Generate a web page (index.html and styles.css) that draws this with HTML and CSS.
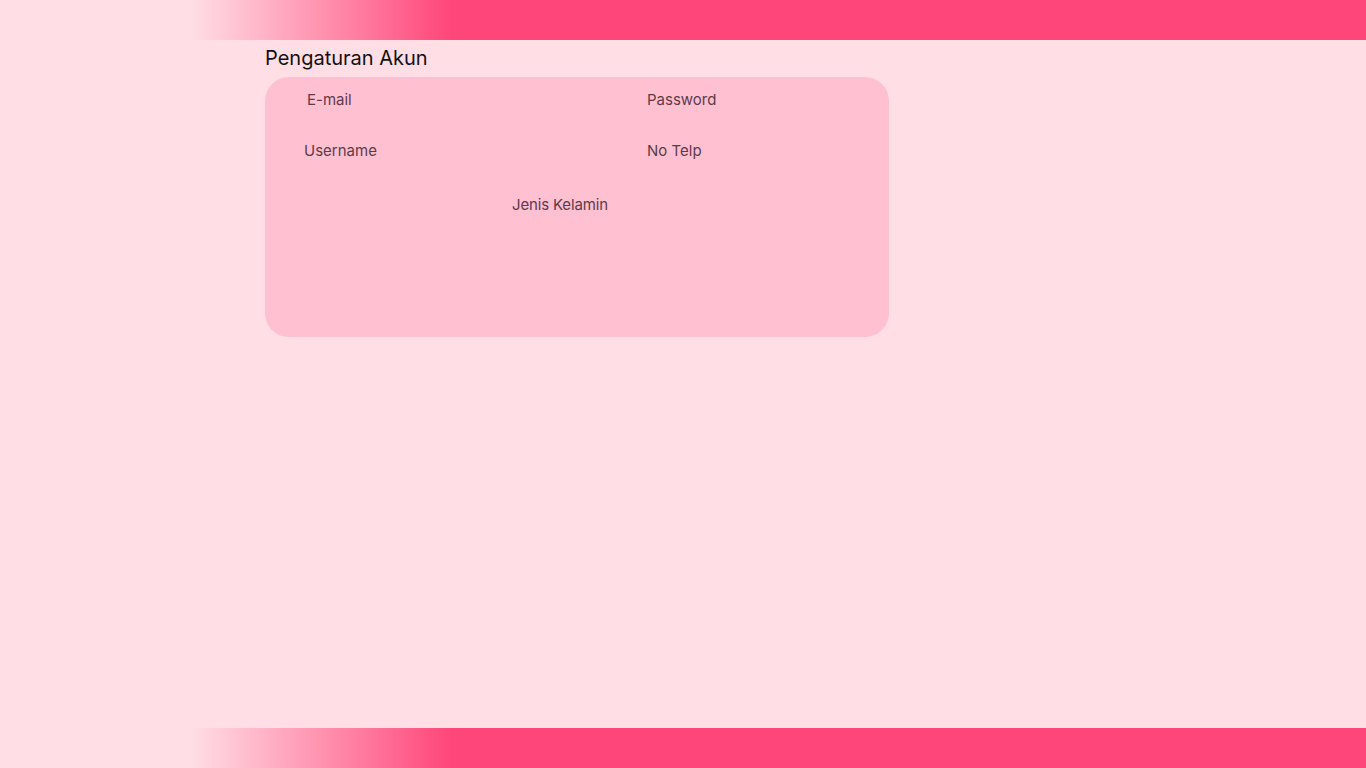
FILE: index.html
```html
<!DOCTYPE html>
<html lang="id">
<head>
<meta charset="utf-8">
<title>Pengaturan Akun</title>
<link rel="stylesheet" href="styles.css">
</head>
<body>
<header class="bar"></header>
<main class="content">
  <h1 class="title">Pengaturan Akun</h1>
  <section class="card">
    <div class="row">
      <span class="label label-email">E-mail</span>
      <span class="label label-right">Password</span>
    </div>
    <div class="row row-2">
      <span class="label label-user">Username</span>
      <span class="label label-right">No Telp</span>
    </div>
    <div class="row row-3">
      <span class="label label-gender">Jenis Kelamin</span>
    </div>
  </section>
</main>
<footer class="bar"></footer>
</body>
</html>
```

FILE: styles.css
```css
html, body {
  margin: 0;
  padding: 0;
  height: 100%;
}
body {
  background: #ffdee5;
  font-family: Inter, "Noto Sans", sans-serif;
  display: flex;
  flex-direction: column;
  min-height: 100vh;
}
.bar {
  height: 40px;
  flex: none;
  background: linear-gradient(to right, #ffdee5 14%, #ff467a 33%);
}
.content {
  flex: 1;
  padding-left: 265px;
}
.title {
  margin: 6px 0 0 0;
  font-size: 20px;
  line-height: 24px;
  font-weight: 400;
  color: #111;
}
.card {
  margin-top: 7px;
  width: 624px;
  height: 260px;
  box-sizing: border-box;
  background: #ffc1d2;
  border-radius: 24px;
  padding-top: 14px;
}
.row {
  display: flex;
  height: 18px;
}
.row-2 { margin-top: 33px; }
.row-3 { margin-top: 36px; }
.label {
  font-size: 15px;
  line-height: 18px;
  color: #5e3a48;
}
.label-email { margin-left: 42px; width: 340px; }
.label-user { margin-left: 39px; width: 343px; }
.label-gender { margin-left: 247px; letter-spacing: -0.15px; }
```
